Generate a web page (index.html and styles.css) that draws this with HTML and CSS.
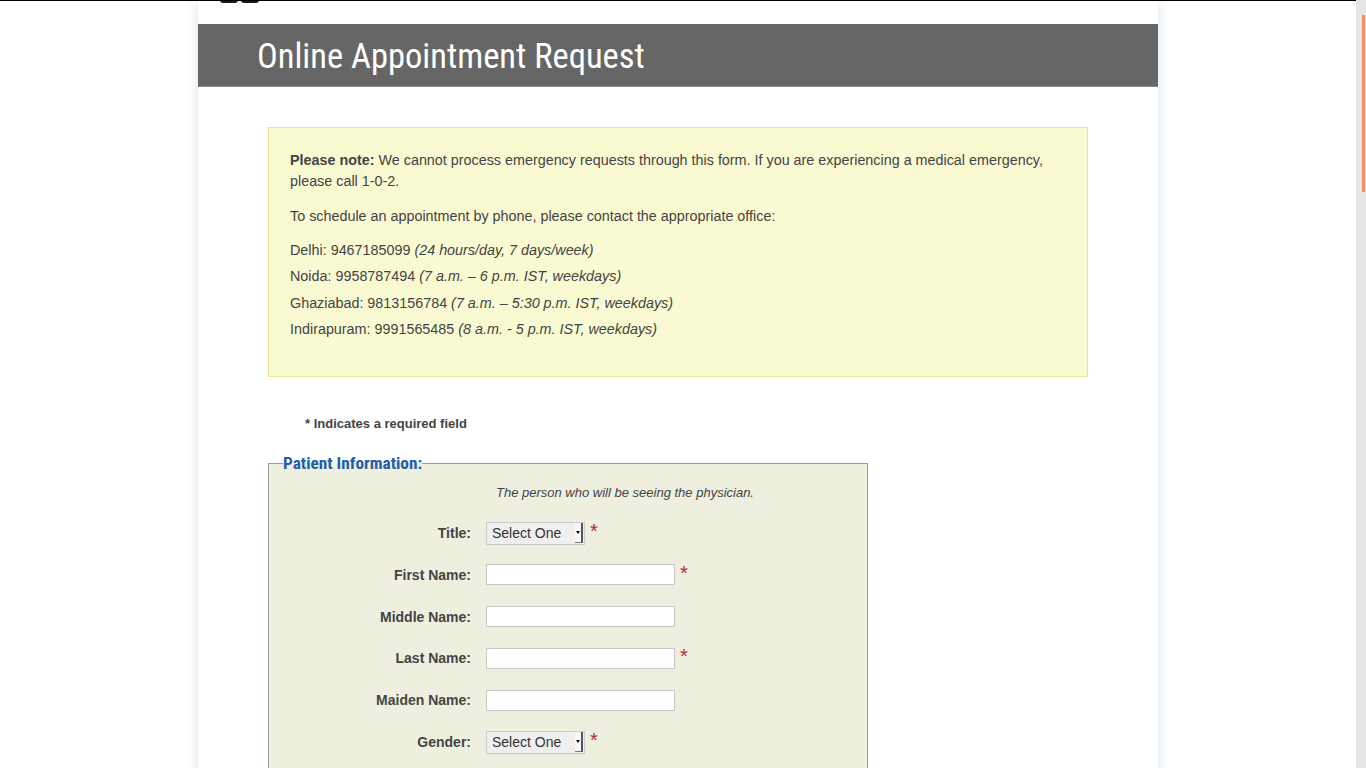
FILE: index.html
```html
<!DOCTYPE html>
<html lang="en">
<head>
<meta charset="utf-8">
<title>Online Appointment Request</title>
<link rel="stylesheet" href="styles.css">
</head>
<body>
<div class="viewport">
  <div class="content">
    <div class="page">
      <div class="brand">
        <span class="logo-bit logo-left"></span><span class="logo-bit logo-right"></span>
      </div>
      <header class="page-header">
        <h1 class="page-title">Online Appointment Request</h1>
      </header>

      <div class="note">
        <p class="note-p"><strong>Please note:</strong> We cannot process emergency requests through this form. If you are experiencing a medical emergency, please call 1-0-2.</p>
        <p class="note-p note-lead">To schedule an appointment by phone, please contact the appropriate office:</p>
        <p class="office">Delhi: 9467185099 <em>(24 hours/day, 7 days/week)</em></p>
        <p class="office">Noida: 9958787494 <em>(7 a.m. – 6 p.m. IST, weekdays)</em></p>
        <p class="office">Ghaziabad: 9813156784 <em>(7 a.m. – 5:30 p.m. IST, weekdays)</em></p>
        <p class="office">Indirapuram: 9991565485 <em>(8 a.m. - 5 p.m. IST, weekdays)</em></p>
      </div>

      <p class="required-note">* Indicates a required field</p>

      <form class="appt-form">
        <fieldset class="group">
          <legend class="group-title">Patient Information:</legend>
          <p class="group-desc">The person who will be seeing the physician.</p>

          <div class="row">
            <label class="row-label">Title:</label>
            <div class="row-field">
              <span class="select"><span class="select-text">Select One</span><span class="select-arrow"></span></span>
              <span class="req">*</span>
            </div>
          </div>
          <div class="row">
            <label class="row-label">First Name:</label>
            <div class="row-field"><input class="text-input" type="text"><span class="req">*</span></div>
          </div>
          <div class="row">
            <label class="row-label">Middle Name:</label>
            <div class="row-field"><input class="text-input" type="text"></div>
          </div>
          <div class="row">
            <label class="row-label">Last Name:</label>
            <div class="row-field"><input class="text-input" type="text"><span class="req">*</span></div>
          </div>
          <div class="row">
            <label class="row-label">Maiden Name:</label>
            <div class="row-field"><input class="text-input" type="text"></div>
          </div>
          <div class="row">
            <label class="row-label">Gender:</label>
            <div class="row-field">
              <span class="select"><span class="select-text">Select One</span><span class="select-arrow"></span></span>
              <span class="req">*</span>
            </div>
          </div>
        </fieldset>
      </form>
    </div>
  </div>
  <div class="scrollbar"><div class="scroll-thumb"></div></div>
</div>
</body>
</html>
```

FILE: styles.css
```css
html, body {
  margin: 0;
  padding: 0;
  height: 100%;
  overflow: hidden;
  background: #ffffff;
  font-family: "Liberation Sans", Arial, sans-serif;
  color: #444444;
}

.viewport {
  display: flex;
  height: 100vh;
}

.content {
  flex: 1;
  overflow: hidden;
  border-top: 1px solid #000000;
}

.scrollbar {
  width: 10px;
  background: #e6e6e6;
  display: flex;
  justify-content: flex-end;
  padding-top: 15px;
  padding-right: 1px;
  box-sizing: border-box;
}

.scroll-thumb {
  width: 3px;
  height: 177px;
  background: #ef9068;
}

.page {
  width: 960px;
  margin: 0 auto;
  min-height: 100%;
  background: #ffffff;
  box-shadow: 0 0 12px rgba(170, 195, 225, 0.45);
}

.brand {
  height: 24px;
  display: flex;
  padding-left: 22px;
  margin-top: -1px;
}

.logo-bit {
  display: block;
  height: 3px;
  background: #1a1a1a;
  border-radius: 0 0 3px 3px;
}

.logo-left { width: 18px; }
.logo-right { width: 18px; margin-left: 3px; }

.page-header {
  height: 62px;
  background: #666666;
  border-bottom: 1px solid #8a8a8a;
  display: flex;
  align-items: center;
  padding-left: 59px;
}

.page-title {
  margin: 0;
  font-family: "Liberation Sans Narrow", "Arial Narrow", "Roboto Condensed", "Liberation Sans", sans-serif;
  font-stretch: condensed;
  font-weight: normal;
  font-size: 34.5px;
  color: #ffffff;
  line-height: 1;
  padding-top: 2px;
}

.note {
  margin: 40px 70px 0 70px;
  background: #fafad2;
  border: 1px solid #ebe69c;
  padding: 22px 21px 22px 21px;
  font-size: 14.35px;
  line-height: 21px;
}

.note-p {
  margin: 0 0 14px 0;
}

.note-lead {
  margin-bottom: 13px;
}

.office {
  margin: 0 0 5.4px 0;
}

.office:last-child {
  margin-bottom: 14px;
}

.required-note {
  margin: 39px 0 0 107px;
  font-size: 13px;
  font-weight: bold;
  line-height: 15px;
}

.appt-form {
  margin: 21px 0 0 70px;
}

.group {
  width: 600px;
  box-sizing: border-box;
  margin: 0;
  padding: 0 14px 20px 14px;
  border: 1px solid #999999;
  background: #efefdf;
  min-height: 400px;
}

.group-title {
  padding: 0;
  font-family: "Liberation Sans Narrow", "Arial Narrow", "Roboto Condensed", "Liberation Sans", sans-serif;
  font-stretch: condensed;
  font-weight: bold;
  font-size: 17.3px;
  color: #1f5fa8;
  line-height: 22px;
}

.group-desc {
  margin: 11px 0 12px 213px;
  font-size: 13px;
  font-style: italic;
  line-height: 15px;
}

.row {
  display: grid;
  grid-template-columns: 188px 1fr;
  column-gap: 15px;
  align-items: center;
  height: 41.8px;
}

.row-label {
  text-align: right;
  font-size: 14px;
  font-weight: bold;
  color: #444444;
}

.row-field {
  display: flex;
  align-items: center;
}

.text-input {
  width: 189px;
  height: 21px;
  box-sizing: border-box;
  border: 1px solid #c8c8c8;
  background: #ffffff;
  margin: 0;
  padding: 0 3px;
  font: 14px "Liberation Sans", Arial, sans-serif;
}

.select {
  width: 99px;
  height: 23px;
  box-sizing: border-box;
  border: 1px solid #cccccc;
  background: #efefef;
  display: flex;
  align-items: center;
  justify-content: space-between;
  padding: 0 1px 0 5px;
  font-size: 14px;
  color: #333333;
}

.select-text {
  line-height: 1;
}

.select-arrow {
  position: relative;
  width: 6px;
  height: 19px;
  background: #f7f7f7;
  border-right: 2px solid #555555;
  border-bottom: 1px solid #777777;
}

.select-arrow::after {
  content: "";
  position: absolute;
  left: 1px;
  top: 8px;
  border-left: 2px solid transparent;
  border-right: 2px solid transparent;
  border-top: 3px solid #000000;
}

.req {
  margin-left: 5px;
  font-size: 20px;
  line-height: 1;
  color: #b22a3c;
  position: relative;
  top: -2px;
}
```
